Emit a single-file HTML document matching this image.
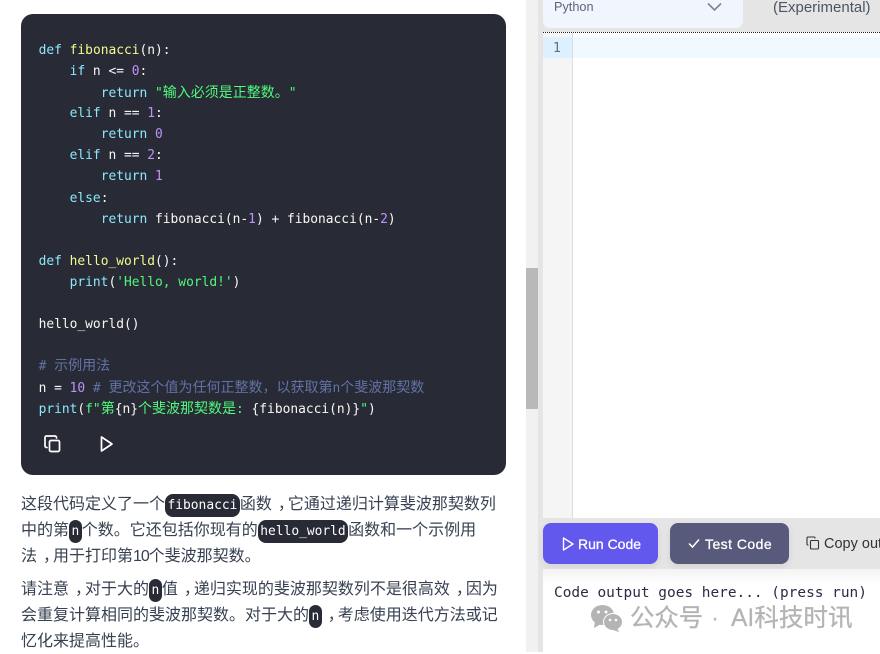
<!DOCTYPE html>
<html lang="zh"><head><meta charset="utf-8"><style>
html,body{margin:0;padding:0;width:880px;height:652px;overflow:hidden;background:#fff}
.a{position:absolute;white-space:pre}
#card{position:absolute;left:21px;top:14px;width:485px;height:461px;background:#282a36;border-radius:12px}
.c{position:absolute;left:38.6px;height:21px;font:12.9px/21px "DejaVu Sans Mono","Noto Sans CJK SC",monospace;color:#f8f8f2;white-space:pre}
.c i{font-style:normal;font-size:14px;font-family:"Noto Sans CJK SC",sans-serif;line-height:21px}
.k{color:#8be9fd}.f{color:#f1fa8c}.n{color:#bd93f9}.s{color:#50fa7b}.m{color:#6272a4}
.t{position:absolute;left:21px;height:25px;font:16px/25px "Liberation Sans","Noto Sans CJK SC",sans-serif;color:#374151;white-space:pre}
.t code{display:inline-block;background:#282a36;color:#fff;border-radius:8px;font:12.9px/23px "DejaVu Sans Mono",monospace;padding:0 2.5px;vertical-align:baseline}
.t b{font-weight:400;position:relative;left:6px}
.btn{position:absolute;top:523px;height:41px;border-radius:8px;color:#fff;font:14px/43px "Liberation Sans",sans-serif;-webkit-text-stroke:.3px #fff;box-shadow:0 3px 8px rgba(0,0,0,.08)}
</style></head><body>
<div id="card"></div>
<div class="c" style="top:40px"><span class="k">def</span> <span class="f">fibonacci</span>(n):</div>
<div class="c" style="top:61px">    <span class="k">if</span> n &lt;= <span class="n">0</span>:</div>
<div class="c" style="top:82px">        <span class="k">return</span> <span class="s">"<i>输入必须是正整数。</i>"</span></div>
<div class="c" style="top:103px">    <span class="k">elif</span> n == <span class="n">1</span>:</div>
<div class="c" style="top:124px">        <span class="k">return</span> <span class="n">0</span></div>
<div class="c" style="top:145px">    <span class="k">elif</span> n == <span class="n">2</span>:</div>
<div class="c" style="top:166px">        <span class="k">return</span> <span class="n">1</span></div>
<div class="c" style="top:188px">    <span class="k">else</span>:</div>
<div class="c" style="top:209px">        <span class="k">return</span> fibonacci(n-<span class="n">1</span>) + fibonacci(n-<span class="n">2</span>)</div>
<div class="c" style="top:251px"><span class="k">def</span> <span class="f">hello_world</span>():</div>
<div class="c" style="top:272px">    <span class="k">print</span>(<span class="s">'Hello, world!'</span>)</div>
<div class="c" style="top:314px">hello_world()</div>
<div class="c" style="top:355px"><span class="m"># <i>示例用法</i></span></div>
<div class="c" style="top:377px">n = <span class="n">10</span> <span class="m"># <i>更改这个值为任何正整数，以获取第</i>n<i>个斐波那契数</i></span></div>
<div class="c" style="top:398px"><span class="k">print</span>(<span class="s">f"<i>第</i></span>{n}<span class="s"><i>个斐波那契数是</i>: </span>{fibonacci(n)}<span class="s">"</span>)</div>
<svg class="a" style="left:42px;top:433px" width="22" height="22" viewBox="0 0 22 22" fill="none" stroke="#fff" stroke-width="1.7" stroke-linejoin="round" stroke-linecap="round"><rect x="7.5" y="7.5" width="10" height="11" rx="1.5"/><path d="M14.5 5V4.5A1.5 1.5 0 0 0 13 3H4.5A1.5 1.5 0 0 0 3 4.5V13A1.5 1.5 0 0 0 4.5 14.5H5"/></svg>
<svg class="a" style="left:98px;top:434px" width="18" height="20" viewBox="0 0 18 20" fill="none" stroke="#fff" stroke-width="1.7" stroke-linejoin="round"><path d="M3.5 3V17L14 10Z"/></svg>

<div class="t" style="top:492px">这段代码定义了一个<code>fibonacci</code>函数<b>，</b>它通过递归计算斐波那契数列</div>
<div class="t" style="top:518px">中的第<code>n</code>个数。它还包括你现有的<code>hello_world</code>函数和一个示例用</div>
<div class="t" style="top:544px">法<b>，</b>用于打印第<span style="letter-spacing:-1.1px">10</span>个斐波那契数。</div>
<div class="t" style="top:577px">请注意<b>，</b>对于大的<code>n</code>值<b>，</b>递归实现的斐波那契数列不是很高效<b>，</b>因为</div>
<div class="t" style="top:603px">会重复计算相同的斐波那契数。对于大的<code>n</code><b>，</b>考虑使用迭代方法或记</div>
<div class="t" style="top:629px">忆化来提高性能。</div>

<div class="a" style="left:526px;top:0;width:12px;height:652px;background:#f1f1f1"></div>
<div class="a" style="left:526px;top:268px;width:12px;height:141px;background:#b9b9b9"></div>
<div class="a" style="left:538px;top:0;width:5px;height:652px;background:#e5e5e5"></div>
<div class="a" style="left:543px;top:0;width:337px;height:32px;background:#e5e5e5"></div>
<div class="a" style="left:543px;top:0;width:200px;height:28px;background:#f1f5fd;border-radius:0 0 7px 7px"></div>
<div class="a" style="left:554px;top:0;font:12.7px/14px 'Liberation Sans',sans-serif;color:#5b6478">Python</div>
<svg class="a" style="left:707px;top:2px" width="15" height="10" viewBox="0 0 15 10" fill="none" stroke="#7b8598" stroke-width="1.6"><path d="M1 1.5L7.5 8L14 1.5"/></svg>
<div class="a" style="left:773px;top:0;font:15px/15px 'Liberation Sans',sans-serif;color:#4b5563">(Experimental)</div>
<div class="a" style="left:543px;top:32px;width:337px;border-top:1px dotted #222"></div>
<div class="a" style="left:543px;top:33px;width:337px;height:485px;background:#fff"></div>
<div class="a" style="left:543px;top:33px;width:29px;height:485px;background:#f5f5f5;border-right:1px solid #ddd"></div>
<div class="a" style="left:543px;top:37px;width:29px;height:21px;background:#ddf0ff"></div>
<div class="a" style="left:573px;top:37px;width:307px;height:21px;background:#f0f9ff"></div>
<div class="a" style="left:553px;top:38px;font:13px/21px 'DejaVu Sans Mono',monospace;color:#6b6b6b">1</div>
<div class="a" style="left:543px;top:518px;width:337px;height:51px;background:#e5e5e5"></div>
<div class="btn" style="left:543px;width:115px;background:#6358ee"><span class="a" style="left:35px;top:0">Run Code</span></div>
<svg class="a" style="left:561px;top:536px" width="14" height="16" viewBox="0 0 14 16" fill="none" stroke="#fff" stroke-width="1.4" stroke-linejoin="round"><path d="M2.5 2V14L12 8Z"/></svg>
<div class="btn" style="left:670px;width:119px;background:#585a7c"><span class="a" style="left:35px;top:0;letter-spacing:.45px">Test Code</span></div>
<svg class="a" style="left:687px;top:537px" width="14" height="12" viewBox="0 0 14 12" fill="none" stroke="#fff" stroke-width="1.5"><path d="M2 6.5L5.5 10L12 2.5"/></svg>
<svg class="a" style="left:805px;top:535px" width="16" height="16" viewBox="0 0 16 16" fill="none" stroke="#333" stroke-width="1.1" stroke-linejoin="round"><rect x="5.5" y="5.5" width="8" height="8.5" rx="1"/><path d="M10 3.5V3A1 1 0 0 0 9 2H3A1 1 0 0 0 2 3V9A1 1 0 0 0 3 10H3.5"/></svg>
<div class="a" style="left:824px;top:534px;font:14.5px/21px 'Liberation Sans',sans-serif;color:#333">Copy out</div>
<div class="a" style="left:543px;top:569px;width:337px;height:83px;background:linear-gradient(#f3f3f3,#fff 16px)"></div>
<div class="a" style="left:554px;top:583px;font:14.45px/20px 'DejaVu Sans Mono',monospace;color:#2b2b45">Code output goes here... (press run)</div>
<svg class="a" style="left:590px;top:604px" width="34" height="28" viewBox="0 0 34 28" fill="#b4b4b4"><ellipse cx="12.5" cy="11" rx="11.5" ry="10"/><path d="M5 17L4 24L11 20Z"/><ellipse cx="23" cy="18" rx="9.5" ry="8.5" stroke="#fff" stroke-width="1"/><path d="M27 24L29 28L23 26Z"/><circle cx="8.5" cy="8" r="1.5" fill="#fff"/><circle cx="16" cy="8" r="1.5" fill="#fff"/><circle cx="20" cy="16" r="1.3" fill="#fff"/><circle cx="26" cy="16" r="1.3" fill="#fff"/></svg>
<div class="a" style="left:630px;top:605px;font:24.4px/28px 'Liberation Sans','Noto Sans CJK SC',sans-serif;color:#b4b4b4;-webkit-text-stroke:.3px #b4b4b4">公众号</div>
<div class="a" style="left:711px;top:605px;font:24.4px/28px 'Liberation Sans','Noto Sans CJK SC',sans-serif;color:#b4b4b4">·</div>
<div class="a" style="left:731px;top:605px;font:24.6px/28px 'Liberation Sans','Noto Sans CJK SC',sans-serif;color:#b4b4b4;-webkit-text-stroke:.3px #b4b4b4">AI科技时讯</div>
</body></html>
